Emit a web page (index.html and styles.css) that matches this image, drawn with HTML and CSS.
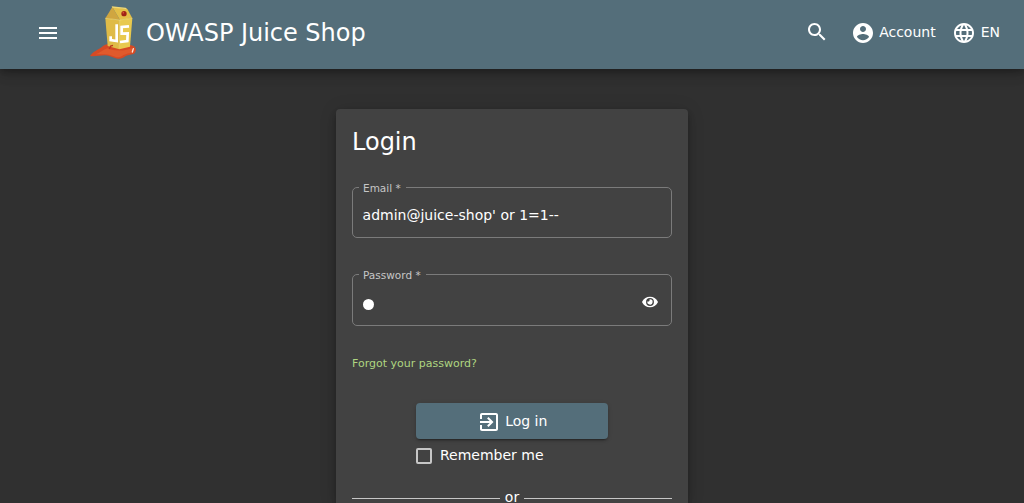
FILE: index.html
```html
<!DOCTYPE html>
<html lang="en">
<head>
<meta charset="utf-8">
<title>OWASP Juice Shop</title>
<link rel="stylesheet" href="styles.css">
</head>
<body>
<header class="toolbar">
  <button class="icon-btn menu" aria-label="Open menu"><svg class="icon" viewBox="0 0 24 24"><path d="M3 18h18v-2H3v2zm0-5h18v-2H3v2zm0-7v2h18V6H3z"/></svg></button>
  <svg class="logo" viewBox="0 0 180 180" role="img" aria-label="Juice Shop">
    <path fill="#d64a24" d="M18 159c8-14 26-19 40-31 12-6 30-7 50-6 18 1 36 3 44 9 6 7 4 18-4 22-9 3-18 2-24 7-6 6-14 8-24 7-14-2-22-9-36-10-16 0-30 4-46 2z"/>
    <path fill="#e05a2c" d="M34 154c14-4 24-14 36-18 18 8 50 10 72 0 10 2 8 12-2 14-12 2-20 4-27 10-8 5-20 2-28-2-16-6-34-4-51-4z"/>
    <path fill="#dfbb48" d="M64 46l43 5-1 88-35-10z"/>
    <path fill="#e8c94e" d="M107 51l38-5-7 85-32 8z"/>
    <path fill="#d0a640" d="M64 46l21-34 23 39z"/>
    <path fill="#e3bf48" d="M85 12l45 6 15 28-37 5z"/>
    <path fill="#f0d774" d="M83 10l42 4 5 5-45-5z"/>
    <path fill="none" stroke="#f4dd75" stroke-width="2" d="M64 46l43 5 38-5M107 51l-1 86"/>
    <path fill="none" stroke="#fff" stroke-width="8" d="M98 64v50l-18-3v-11"/>
    <path fill="none" stroke="#fff" stroke-width="8" d="M135 70l-22 2v20l18-1-1 23-22 3"/>
    <ellipse cx="120" cy="32" rx="8" ry="8" fill="#9f2217"/>
    <circle cx="118" cy="29" r="2.500" fill="#d84e36"/>
    <path fill="none" stroke="#b9381f" stroke-width="4" d="M76 138l4-9 7-2"/>
    <path fill="none" stroke="#ffe6dc" stroke-width="4" stroke-linecap="round" d="M148 137l-3 10"/>
  </svg>
  <span class="brand">OWASP Juice Shop</span>
  <button class="icon-btn search" aria-label="Search"><svg class="icon" viewBox="0 0 24 24"><path d="M15.500 14h-.79l-.28-.27C15.410 12.590 16 11.110 16 9.500 16 5.910 13.090 3 9.500 3S3 5.910 3 9.500 5.910 16 9.500 16c1.610 0 3.090-.59 4.230-1.570l.27.28v.79l5 4.990L20.490 19l-4.990-5zm-6 0C7.010 14 5 11.990 5 9.500S7.010 5 9.500 5 14 7.010 14 9.500 11.990 14 9.500 14z"/></svg></button>
  <button class="nav-btn account"><svg class="icon" viewBox="0 0 24 24"><path d="M12 2C6.480 2 2 6.480 2 12s4.480 10 10 10 10-4.480 10-10S17.520 2 12 2zm0 3c1.660 0 3 1.340 3 3s-1.340 3-3 3-3-1.340-3-3 1.340-3 3-3zm0 14.200c-2.500 0-4.710-1.280-6-3.220.03-1.990 4-3.080 6-3.080 1.990 0 5.970 1.090 6 3.080-1.290 1.940-3.500 3.220-6 3.220z"/></svg><span>Account</span></button>
  <button class="nav-btn language"><svg class="icon" viewBox="0 0 24 24"><path d="M11.990 2C6.470 2 2 6.480 2 12s4.470 10 9.990 10C17.520 22 22 17.520 22 12S17.520 2 11.990 2zm6.930 6h-2.950c-.32-1.250-.78-2.450-1.380-3.560 1.840.63 3.370 1.910 4.330 3.560zM12 4.040c.83 1.200 1.480 2.530 1.910 3.960h-3.820c.43-1.430 1.080-2.760 1.910-3.960zM4.260 14C4.100 13.360 4 12.690 4 12s.1-1.360.26-2h3.380c-.08.66-.14 1.320-.14 2s.06 1.340.14 2H4.260zm.82 2h2.950c.32 1.250.78 2.450 1.380 3.560-1.840-.63-3.370-1.900-4.330-3.560zm2.950-8H5.080c.96-1.660 2.490-2.930 4.330-3.560C8.810 5.550 8.350 6.750 8.030 8zM12 19.960c-.83-1.200-1.480-2.530-1.910-3.960h3.820c-.43 1.430-1.080 2.760-1.910 3.960zM14.340 14H9.660c-.09-.66-.16-1.320-.16-2s.07-1.350.16-2h4.680c.09.65.16 1.320.16 2s-.07 1.340-.16 2zm.25 5.560c.6-1.110 1.060-2.310 1.380-3.560h2.950c-.96 1.650-2.490 2.930-4.330 3.560zM16.360 14c.08-.66.14-1.320.14-2s-.06-1.340-.14-2h3.380c.16.64.26 1.310.26 2s-.1 1.360-.26 2h-3.380z"/></svg><span>EN</span></button>
</header>
<main class="page">
  <section class="card">
    <h1 class="heading">Login</h1>
    <fieldset class="field">
      <legend class="label">Email *</legend>
      <span class="value">admin@juice-shop' or 1=1--</span>
    </fieldset>
    <fieldset class="field password">
      <legend class="label">Password *</legend>
      <span class="mask"></span>
      <svg class="eye" viewBox="0 0 576 512"><path d="M572.520 241.400C518.290 135.590 410.930 64 288 64S57.680 135.640 3.480 241.410a32.350 32.350 0 0 0 0 29.190C57.710 376.410 165.070 448 288 448s230.320-71.640 284.520-177.410a32.350 32.350 0 0 0 0-29.190zM288 400a144 144 0 1 1 144-144 143.930 143.930 0 0 1-144 144zm0-240a95.310 95.310 0 0 0-25.310 3.790 47.850 47.850 0 0 1-66.900 66.900A95.780 95.780 0 1 0 288 160z"/></svg>
    </fieldset>
    <a class="forgot">Forgot your password?</a>
    <div class="actions">
      <button class="login-btn"><svg class="icon" viewBox="0 0 24 24"><path d="M10.090 15.590L11.500 17l5-5-5-5-1.410 1.410L12.670 11H3v2h9.670l-2.580 2.590zM19 3H5c-1.110 0-2 .9-2 2v4h2V5h14v14H5v-4H3v4c0 1.100.89 2 2 2h14c1.100 0 2-.9 2-2V5c0-1.100-.9-2-2-2z"/></svg><span>Log in</span></button>
      <label class="remember"><span class="box"></span>Remember me</label>
    </div>
    <div class="divider">or</div>
  </section>
</main>
</body>
</html>
```
FILE: styles.css
```css
* { box-sizing: border-box; }
body {
  margin: 0;
  background: #303030;
  color: #fff;
  font: 14px/20px "DejaVu Sans", sans-serif;
}
button {
  margin: 0;
  padding: 0;
  border: 0;
  background: none;
  color: inherit;
  font: inherit;
}
.icon { display: block; width: 24px; height: 24px; fill: #fff; flex: none; }

.toolbar {
  position: relative;
  display: flex;
  align-items: center;
  height: 69px;
  padding: 0 24px 4px 36px;
  background: #546e7a;
  box-shadow: 0 3px 5px -1px rgba(0,0,0,.2), 0 6px 10px rgba(0,0,0,.14), 0 1px 18px rgba(0,0,0,.12);
}
.menu { padding-top: 1px; }
.logo { width: 60px; height: 60px; margin-left: 24px; }
.brand { margin-left: 2px; font-size: 24px; line-height: 32px; letter-spacing: -.02px; }
.search { margin-left: auto; margin-right: 22px; padding-bottom: 1px; }
.nav-btn { display: flex; align-items: center; gap: 4px; }
.nav-btn .icon { margin-top: 1px; }
.nav-btn span { padding-bottom: 2px; }
.account { margin-right: 16px; }
.language { gap: 5px; }

.page { display: flex; justify-content: center; height: 434px; padding-top: 40px; overflow: hidden; }
.card {
  width: 352px;
  padding: 17px 16px 0;
  border-radius: 4px 4px 0 0;
  background: #424242;
  box-shadow: 0 3px 5px -1px rgba(0,0,0,.2), 0 6px 10px rgba(0,0,0,.14), 0 1px 18px rgba(0,0,0,.12);
}
.heading { margin: 0 0 23px; font-size: 24px; font-weight: 400; line-height: 32px; }
.field {
  display: flex;
  align-items: center;
  height: 57px;
  margin: 0 0 30px;
  padding: 0 13px 1px 9.6px;
  border: 1px solid #7b7b7b;
  border-radius: 5px;
  min-width: 0;
}
.password { height: 58px; padding-bottom: 2px; }
.label {
  height: 12px;
  margin-left: -3.6px;
  padding: 0 5px 0 4px;
  color: #c6c6c6;
  font-size: 10.5px;
  line-height: 14px;
}
.mask { width: 11px; height: 11px; margin-top: 5px; border-radius: 50%; background: #fff; }
.eye { width: 16px; height: 14px; margin-left: auto; fill: #fff; }
.forgot { display: block; color: #aed581; font-size: 11px; line-height: 16px; }

.actions { width: 192px; margin: 31px auto 0; }
.login-btn {
  display: flex;
  align-items: center;
  justify-content: center;
  gap: 4.500px;
  width: 100%;
  height: 36px;
  border-radius: 4px;
  background: #546e7a;
  box-shadow: 0 3px 1px -2px rgba(0,0,0,.2), 0 2px 2px rgba(0,0,0,.14), 0 1px 5px rgba(0,0,0,.12);
}
.login-btn .icon { margin-top: 2px; }
.remember { display: flex; gap: 8px; margin-top: 6px; }
.box { width: 16px; height: 16px; margin-top: 3px; border: 2px solid #c6c6c6; border-radius: 2px; }
.divider { display: flex; align-items: center; gap: 5px; height: 16px; margin-top: 24px; }
.divider::before, .divider::after { content: ""; flex: 1; height: 1px; margin-top: 2px; background: #c6c6c6; }
```
